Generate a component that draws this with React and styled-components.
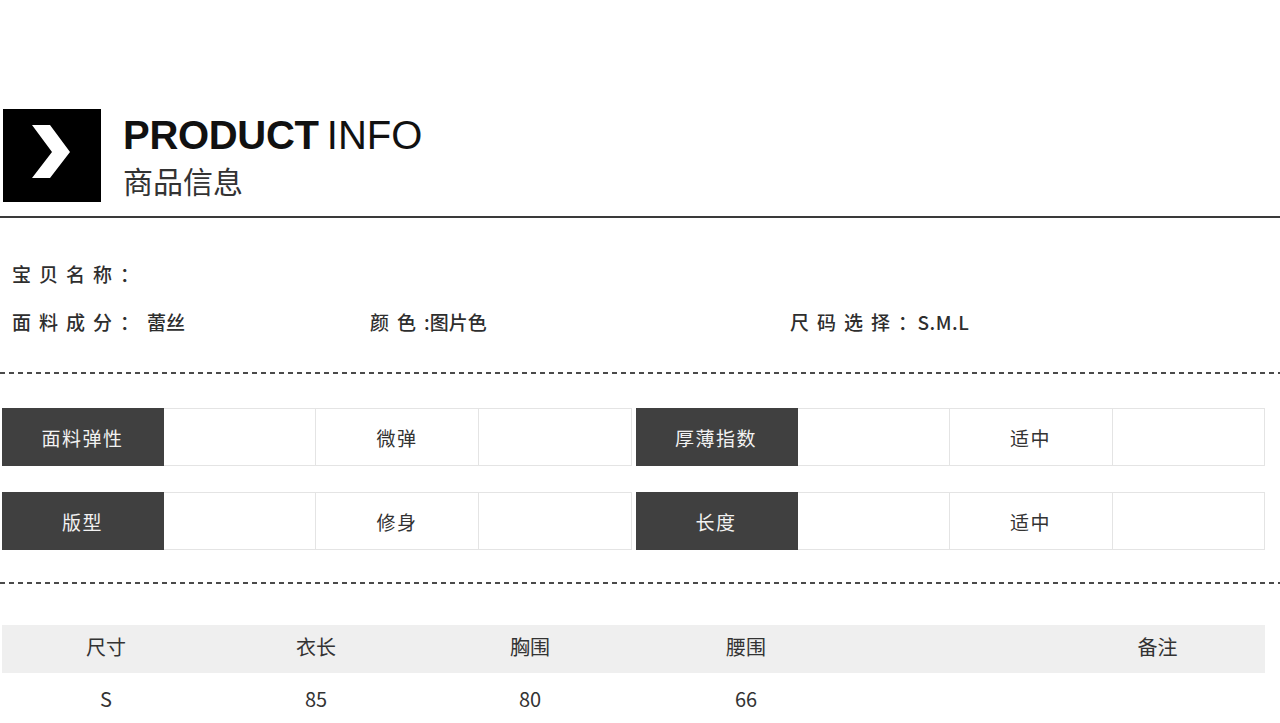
import React from 'react'
import styled, { createGlobalStyle } from 'styled-components'

const GlobalStyle = createGlobalStyle`
  body {
    margin: 0;
    background: #fff;
    font-family: "Noto Sans CJK SC", "Noto Sans", sans-serif;
    color: #333;
  }
`

const Page = styled.div`
  width: 1280px;
  padding-top: 109px;
`

// Header
const Header = styled.div`
  display: flex;
  align-items: flex-start;
  padding-left: 3px;
  gap: 22px;
`
const Badge = styled.div`
  width: 98px;
  height: 93px;
  background: #000;
  flex-shrink: 0;
  svg { display: block; }
`
const TitleBlock = styled.div`
  display: flex;
  flex-direction: column;
`
const TitleEn = styled.div`
  font-family: "Liberation Sans", Arial, sans-serif;
  font-size: 40px;
  line-height: 40px;
  margin-top: 6px;
  color: #111;
  word-spacing: -3px;
  b { font-weight: 700; letter-spacing: -0.3px; }
  span { font-weight: 400; }
`
const TitleCn = styled.div`
  font-size: 30px;
  line-height: 30px;
  margin-top: 10px;
  color: #333;
`
const Rule = styled.div`
  height: 2px;
  background: #3a3a3a;
  margin-top: 14px;
`

// Basic info
const Info = styled.div`
  margin-top: 32px;
  padding-left: 12px;
`
const InfoRow = styled.div`
  display: grid;
  grid-template-columns: 358px 420px 1fr;
  height: 48px;
  align-items: center;
  font-size: 19px;
  line-height: 48px;
  font-weight: 500;
  color: #2e2e2e;
`
const Label = styled.span`
  letter-spacing: 8px;
`
const Value = styled.span`
  letter-spacing: ${p => p.$spacing || 0}px;
`

const Dashed = styled.div`
  height: 2px;
  margin-top: ${p => p.$top}px;
  background: repeating-linear-gradient(to right, #4a4a4a 0 5px, transparent 5px 9px);
`

// Spec table
const Specs = styled.div`
  margin-top: 34px;
  display: flex;
  flex-direction: column;
  gap: 26px;
`
const SpecRow = styled.div`
  display: flex;
  gap: 4px;
  padding: 0 15px 0 2px;
`
const Group = styled.div`
  flex: 1;
  display: grid;
  grid-template-columns: 162px 152px 163px 1fr;
`
const Cell = styled.div`
  height: 58px;
  box-sizing: border-box;
  display: flex;
  align-items: center;
  justify-content: center;
  font-size: 19px;
  letter-spacing: 1.5px;
  border-top: 1px solid ${p => (p.$dark ? '#404040' : '#e4e4e4')};
  border-bottom: 1px solid ${p => (p.$dark ? '#404040' : '#e4e4e4')};
  border-right: 1px solid ${p => (p.$dark ? '#404040' : '#e4e4e4')};
  background: ${p => (p.$dark ? '#404040' : '#fff')};
  color: ${p => (p.$dark ? '#f2f2f2' : '#333')};
`

// Size chart
const SizeTable = styled.div`
  margin-top: 41px;
  padding: 0 15px 0 2px;
`
const SizeRow = styled.div`
  display: grid;
  grid-template-columns: 208px 212px 216px 216px 196px 1fr;
  height: ${p => (p.$head ? 48 : 52)}px;
  align-items: center;
  background: ${p => (p.$head ? '#efefef' : 'transparent')};
  font-size: 20px;
  line-height: 24px;
  color: #333;
`
const SizeCell = styled.div`
  text-align: center;
  margin-top: ${p => (p.$head ? -4 : 0)}px;
`

const specs = [
  [
    ['面料弹性', '微弹'],
    ['厚薄指数', '适中'],
  ],
  [
    ['版型', '修身'],
    ['长度', '适中'],
  ],
]

const sizeHead = ['尺寸', '衣长', '胸围', '腰围', '', '备注']
const sizeRows = [['S', '85', '80', '66', '', '']]

const Chevron = () => (
  <svg width="98" height="93" viewBox="0 0 98 93">
    <polygon points="29,16 47,16 67,43 47,69 29,69 49,43" fill="#fff" />
  </svg>
)

export default function App() {
  return (
    <Page>
      <GlobalStyle />
      <Header>
        <Badge>
          <Chevron />
        </Badge>
        <TitleBlock>
          <TitleEn>
            <b>PRODUCT</b> <span>INFO</span>
          </TitleEn>
          <TitleCn>商品信息</TitleCn>
        </TitleBlock>
      </Header>
      <Rule />

      <Info>
        <InfoRow>
          <div>
            <Label>宝贝名称：</Label>
          </div>
        </InfoRow>
        <InfoRow>
          <div>
            <Label>面料成分：</Label>
            <Value>蕾丝</Value>
          </div>
          <div>
            <Label>颜色</Label>
            <Value>:图片色</Value>
          </div>
          <div>
            <Label>尺码选择</Label>
            <Value $spacing={0.5}>：S.M.L</Value>
          </div>
        </InfoRow>
      </Info>

      <Dashed $top={26} />

      <Specs>
        {specs.map((row, i) => (
          <SpecRow key={i}>
            {row.map(([name, val]) => (
              <Group key={name}>
                <Cell $dark>{name}</Cell>
                <Cell />
                <Cell>{val}</Cell>
                <Cell />
              </Group>
            ))}
          </SpecRow>
        ))}
      </Specs>

      <Dashed $top={32} />

      <SizeTable>
        <SizeRow $head>
          {sizeHead.map((h, i) => (
            <SizeCell key={i} $head>{h}</SizeCell>
          ))}
        </SizeRow>
        {sizeRows.map((r, i) => (
          <SizeRow key={i}>
            {r.map((c, j) => (
              <SizeCell key={j}>{c}</SizeCell>
            ))}
          </SizeRow>
        ))}
      </SizeTable>
    </Page>
  )
}
